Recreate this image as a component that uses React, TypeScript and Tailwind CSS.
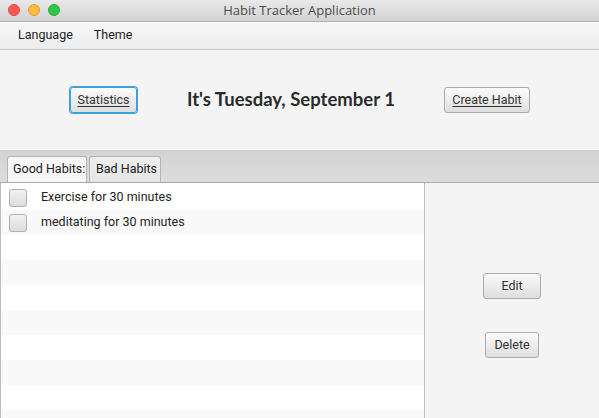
import React from 'react';

const habits = ['Exercise for 30 minutes', 'meditating for 30 minutes'];

function FxButton({ label, focused, className }: { label: React.ReactNode; focused?: boolean; className?: string }) {
  return (
    <button
      className={
        'h-[26px] rounded-[3px] border bg-gradient-to-b from-[#fbfbfb] to-[#dedede] text-[12.5px] text-[#333] ' +
        (focused ? 'border-[#3aa3dc] ring-1 ring-[#3aa3dc] ' : 'border-[#ababab] ') +
        (className ?? '')
      }
    >
      {label}
    </button>
  );
}

export default function App() {
  const rows = Array.from({ length: 10 });

  return (
    <div className="w-[599px] h-[418px] overflow-hidden flex flex-col bg-[#f4f4f4] font-['Roboto','Liberation_Sans',sans-serif]">
      {/* Title bar */}
      <div className="relative h-[22px] shrink-0 flex items-center justify-center bg-gradient-to-b from-[#e9e9e9] to-[#d2d2d2] border-b border-[#b1b1b1]">
        <div className="absolute left-[8px] top-[4px] flex gap-[8px]">
          <span className="w-[12px] h-[12px] rounded-full bg-[#fc5753] border border-[#df4744]" />
          <span className="w-[12px] h-[12px] rounded-full bg-[#fdbc40] border border-[#de9f34]" />
          <span className="w-[12px] h-[12px] rounded-full bg-[#33c748] border border-[#27aa35]" />
        </div>
        <span className="text-[13px] text-[#4c4c4c] font-['Open_Sans','Liberation_Sans',sans-serif]">Habit Tracker Application</span>
      </div>

      {/* Menu bar */}
      <div className="h-[28px] shrink-0 flex items-center pl-[18px] gap-[21px] bg-gradient-to-b from-[#f8f8f8] to-[#ececec] border-b border-[#c9c9c9] text-[12.5px] text-[#222]">
        <span>Language</span>
        <span>Theme</span>
      </div>

      {/* Header */}
      <div className="h-[100px] shrink-0 flex items-center pl-[70px] bg-[#f4f4f4]">
        <FxButton focused className="w-[67px]" label={<span className="underline underline-offset-2">Statistics</span>} />
        <h1 className="ml-[50px] w-[207px] text-[18.5px] font-bold text-[#2b2b2b] font-['Lato','Noto_Sans',sans-serif] whitespace-nowrap">
          It's Tuesday, September 1
        </h1>
        <FxButton className="ml-[50px] w-[86px]" label={<span className="underline underline-offset-2">Create Habit</span>} />
      </div>

      {/* Tabs */}
      <div className="h-[33px] shrink-0 flex items-end pl-[7px] gap-[2px] bg-gradient-to-b from-[#d3d3d3] to-[#dcdcdc] border-b border-[#aaaaaa]">
        <div className="w-[80px] h-[26px] flex items-center pl-[5px] rounded-t-[3px] border border-b-0 border-[#b4b4b4] bg-[#f7f7f7] text-[12.5px] text-[#222] whitespace-nowrap overflow-hidden">
          Good Habits:
        </div>
        <div className="w-[72px] h-[26px] flex items-center pl-[6px] rounded-t-[3px] border border-b-0 border-[#b4b4b4] bg-gradient-to-b from-[#efefef] to-[#e4e4e4] text-[12.5px] text-[#222]">
          Bad Habits
        </div>
      </div>

      {/* Content */}
      <div className="flex-1 flex min-h-0">
        <div className="w-[425px] shrink-0 border-l border-r border-[#bdbdbd] bg-white pt-[2px] overflow-hidden">
          {rows.map((_, i) => (
            <div
              key={i}
              className={'h-[25px] flex items-center ' + (i % 2 === 1 ? 'bg-[#f9f9f9]' : 'bg-white')}
            >
              {habits[i] && (
                <>
                  <span className="ml-[8px] w-[18px] h-[18px] rounded-[3px] border border-[#b0b0b0] bg-gradient-to-b from-[#f2f2f2] to-[#dcdcdc]" />
                  <span className="ml-[14px] text-[12.5px] text-[#222]">{habits[i]}</span>
                </>
              )}
            </div>
          ))}
        </div>
        <div className="flex-1 flex flex-col items-center pt-[90px] bg-[#f4f4f4]">
          <FxButton className="w-[58px]" label="Edit" />
          <FxButton className="mt-[33px] w-[54px]" label="Delete" />
        </div>
      </div>
    </div>
  );
}
